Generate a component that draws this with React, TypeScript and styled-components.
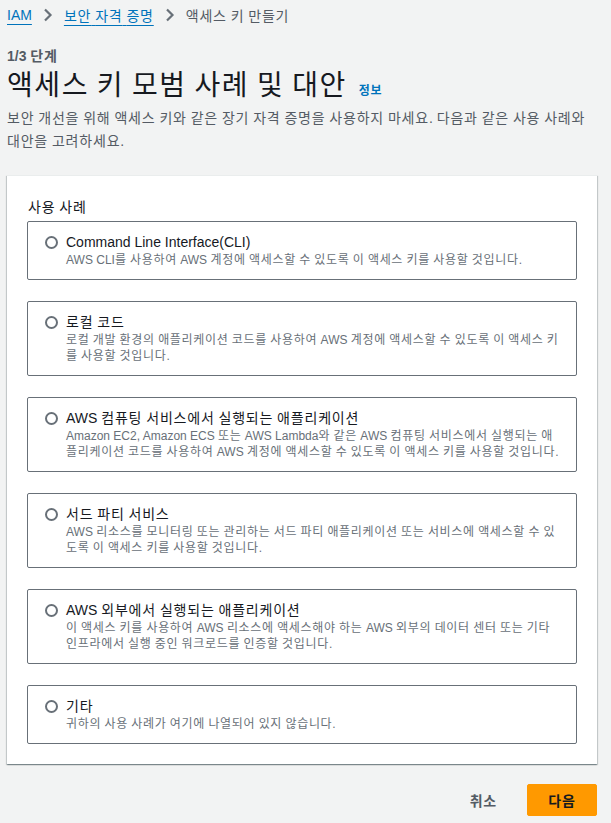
import React from "react";
import styled, { createGlobalStyle } from "styled-components";

const GlobalStyle = createGlobalStyle`
  html, body { margin: 0; padding: 0; background: #f2f3f3; }
  body {
    font-family: "Liberation Sans", "Noto Sans CJK KR", sans-serif;
    color: #16191f;
    -webkit-font-smoothing: antialiased;
  }
  button { font-family: inherit; }
  * { box-sizing: border-box; }
`;

/* Hangul runs are set slightly looser so their advance matches the reference's Korean face */
const Hangul = styled.span`
  letter-spacing: 0.057em;
`;

function K({ children }: { children: string }) {
  const parts = children.split(/([\uAC00-\uD7A3\u3131-\u318E]+)/);
  return (
    <>
      {parts.map((p, i) => (i % 2 === 1 ? <Hangul key={i}>{p}</Hangul> : p))}
    </>
  );
}

const Page = styled.div`
  width: 611px;
  padding: 4px 14px 6px 7px;
  display: flex;
  flex-direction: column;
`;

const Breadcrumbs = styled.nav`
  display: flex;
  align-items: center;
  gap: 11px;
  height: 22px;
  font-size: 14px;
`;

const Crumb = styled.a`
  color: #0073bb;
  text-decoration: underline;
  text-underline-offset: 4px;
  text-decoration-thickness: 1px;
`;

const CurrentCrumb = styled.span`
  color: #545b64;
`;

const Chevron = () => (
  <svg width="10" height="14" viewBox="0 0 10 14">
    <path d="M2 1.5 L7.5 7 L2 12.5" fill="none" stroke="#687078" strokeWidth="2.2" />
  </svg>
);

const Header = styled.header`
  display: flex;
  flex-direction: column;
  margin-top: 20px;
`;

const StepLabel = styled.div`
  font-size: 14px;
  font-weight: 700;
  color: #545b64;
  line-height: 20px;
`;

const TitleRow = styled.div`
  display: flex;
  align-items: baseline;
  gap: 12px;
  margin-top: 2px;
`;

const Title = styled.h1`
  margin: 0;
  font-size: 28px;
  font-weight: 400;
  line-height: 36px;
  color: #16191f;
`;

const InfoLink = styled.a`
  font-size: 12px;
  font-weight: 700;
  color: #0073bb;
`;

const Description = styled.p`
  margin: 3px 0 0;
  font-size: 14px;
  line-height: 23px;
  color: #545b64;
`;

const Card = styled.section`
  margin-top: 22px;
  background: #ffffff;
  padding: 20px;
  box-shadow: 0 1px 1px 0 rgba(0, 28, 36, 0.3),
    1px 1px 1px 0 rgba(0, 28, 36, 0.15),
    -1px 1px 1px 0 rgba(0, 28, 36, 0.15);
  border-top: 1px solid #eaeded;
`;

const FieldLabel = styled.div`
  font-size: 14px;
  line-height: 22px;
  color: #16191f;
  padding-left: 1px;
  margin-bottom: 3px;
`;

const Tiles = styled.div`
  display: flex;
  flex-direction: column;
  gap: 21px;
`;

const Tile = styled.label`
  display: flex;
  align-items: flex-start;
  gap: 8px;
  border: 1px solid #687078;
  border-radius: 2px;
  padding: 10px 17px 11px 17px;
  cursor: pointer;
`;

const Radio = styled.span`
  flex: none;
  width: 13px;
  height: 13px;
  margin-top: 4px;
  border: 2px solid #687078;
  border-radius: 50%;
  background: #fff;
`;

const TileText = styled.div`
  display: flex;
  flex-direction: column;
`;

const TileTitle = styled.div`
  font-size: 14px;
  line-height: 20px;
  color: #16191f;
`;

const TileDesc = styled.div`
  font-size: 12px;
  line-height: 16px;
  color: #687078;
`;

const Actions = styled.div`
  display: flex;
  justify-content: flex-end;
  align-items: center;
  gap: 10px;
  margin-top: 20px;
`;

const LinkButton = styled.button`
  background: none;
  border: none;
  font-size: 14px;
  font-weight: 700;
  color: #545b64;
  padding: 4px 20px;
  height: 32px;
`;

const PrimaryButton = styled.button`
  background: #ff9900;
  border: 1px solid #ff9900;
  border-radius: 2px;
  font-size: 14px;
  font-weight: 700;
  color: #16191f;
  width: 70px;
  height: 32px;
  padding: 0;
`;

const options: { title: string; desc: string }[] = [
  {
    title: "Command Line Interface(CLI)",
    desc: "AWS CLI를 사용하여 AWS 계정에 액세스할 수 있도록 이 액세스 키를 사용할 것입니다.",
  },
  {
    title: "로컬 코드",
    desc: "로컬 개발 환경의 애플리케이션 코드를 사용하여 AWS 계정에 액세스할 수 있도록 이 액세스 키를 사용할 것입니다.",
  },
  {
    title: "AWS 컴퓨팅 서비스에서 실행되는 애플리케이션",
    desc: "Amazon EC2, Amazon ECS 또는 AWS Lambda와 같은 AWS 컴퓨팅 서비스에서 실행되는 애플리케이션 코드를 사용하여 AWS 계정에 액세스할 수 있도록 이 액세스 키를 사용할 것입니다.",
  },
  {
    title: "서드 파티 서비스",
    desc: "AWS 리소스를 모니터링 또는 관리하는 서드 파티 애플리케이션 또는 서비스에 액세스할 수 있도록 이 액세스 키를 사용할 것입니다.",
  },
  {
    title: "AWS 외부에서 실행되는 애플리케이션",
    desc: "이 액세스 키를 사용하여 AWS 리소스에 액세스해야 하는 AWS 외부의 데이터 센터 또는 기타 인프라에서 실행 중인 워크로드를 인증할 것입니다.",
  },
  {
    title: "기타",
    desc: "귀하의 사용 사례가 여기에 나열되어 있지 않습니다.",
  },
];

export default function App() {
  return (
    <>
      <GlobalStyle />
      <Page>
        <Breadcrumbs>
          <Crumb>IAM</Crumb>
          <Chevron />
          <Crumb><K>보안 자격 증명</K></Crumb>
          <Chevron />
          <CurrentCrumb><K>액세스 키 만들기</K></CurrentCrumb>
        </Breadcrumbs>
        <Header>
          <StepLabel><K>1/3 단계</K></StepLabel>
          <TitleRow>
            <Title><K>액세스 키 모범 사례 및 대안</K></Title>
            <InfoLink><K>정보</K></InfoLink>
          </TitleRow>
          <Description>
            <K>보안 개선을 위해 액세스 키와 같은 장기 자격 증명을 사용하지 마세요. 다음과 같은 사용 사례와 대안을 고려하세요.</K>
          </Description>
        </Header>
        <Card>
          <FieldLabel><K>사용 사례</K></FieldLabel>
          <Tiles>
            {options.map((o) => (
              <Tile key={o.title}>
                <Radio />
                <TileText>
                  <TileTitle><K>{o.title}</K></TileTitle>
                  <TileDesc><K>{o.desc}</K></TileDesc>
                </TileText>
              </Tile>
            ))}
          </Tiles>
        </Card>
        <Actions>
          <LinkButton><K>취소</K></LinkButton>
          <PrimaryButton><K>다음</K></PrimaryButton>
        </Actions>
      </Page>
    </>
  );
}
